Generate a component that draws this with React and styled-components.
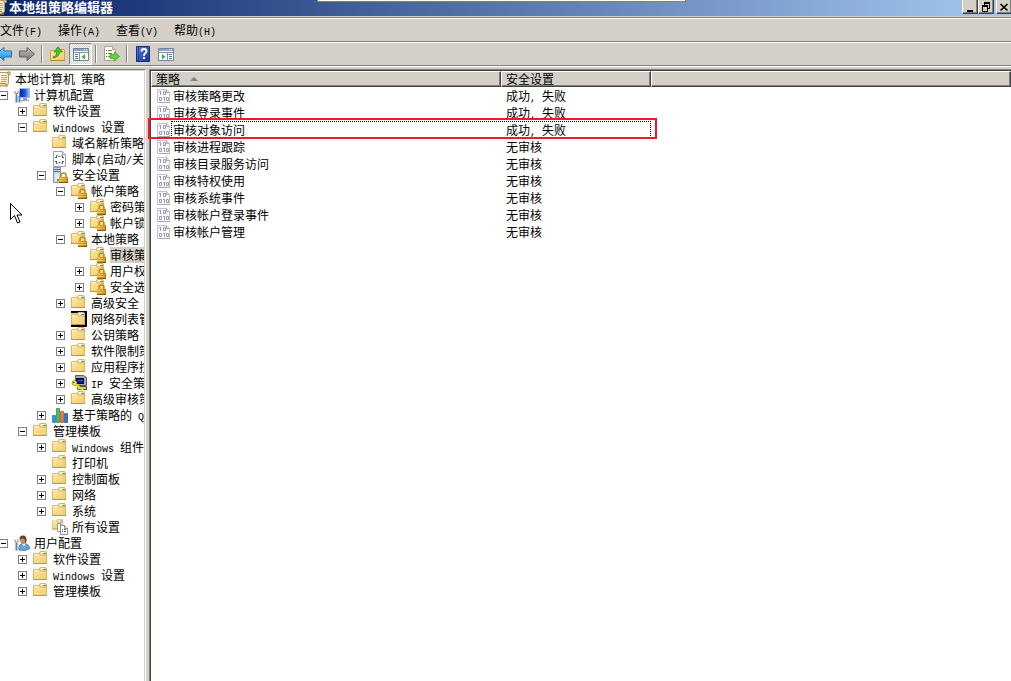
import React, { useState } from "react";
import styled, { createGlobalStyle, css } from "styled-components";

const FACE = "#d4d0c8";
const SHADOW = "#808080";
const DARK = "#404040";

const GlobalStyle = createGlobalStyle`
  *, *::before, *::after { box-sizing: border-box; }
  body {
    margin: 0;
    background: ${FACE};
    color: #000;
    font: 12px/16px "Noto Sans CJK SC", sans-serif;
  }
  button { font: inherit; color: inherit; padding: 0; border: 0; background: none; }
  svg { display: block; flex: none; }
`;

const Latin = styled.span`
  font-family: "Liberation Mono", monospace;
  font-size: 10px;
  line-height: 0;
  white-space: pre;
`;

/* Latin runs are set in a half-width face beside the full-width characters. */
function Mixed({ children }) {
  return children
    .split(/([\x20-\x7e]+)/)
    .filter(Boolean)
    .map((part, i) => (/^[\x20-\x7e]/.test(part) ? <Latin key={i}>{part}</Latin> : part));
}

/* ---------- icons ---------- */

const Icon = ({ children, size = 16 }) => (
  <svg width={size} height={size} viewBox={`0 0 ${size} ${size}`} aria-hidden="true">
    {children}
  </svg>
);

const HiddenSvg = styled.svg`
  position: absolute;
  width: 0;
  height: 0;
`;

const Gradients = () => (
  <HiddenSvg aria-hidden="true">
    <defs>
      <linearGradient id="gFolder" x1="0" y1="0" x2="1" y2="1">
        <stop offset="0" stopColor="#ffe9a4" />
        <stop offset="1" stopColor="#f0cb6c" />
      </linearGradient>
      <linearGradient id="gLock" x1="0" y1="0" x2="1" y2="0">
        <stop offset="0" stopColor="#e9b736" />
        <stop offset="1" stopColor="#b8780c" />
      </linearGradient>
      <linearGradient id="gBlue" x1="0" y1="0" x2="0" y2="1">
        <stop offset="0" stopColor="#8adcff" />
        <stop offset="1" stopColor="#1185d6" />
      </linearGradient>
      <linearGradient id="gGray" x1="0" y1="0" x2="0" y2="1">
        <stop offset="0" stopColor="#c0c0c0" />
        <stop offset="1" stopColor="#747474" />
      </linearGradient>
      <linearGradient id="gHelp" x1="0" y1="0" x2="1" y2="1">
        <stop offset="0" stopColor="#5c80e0" />
        <stop offset="1" stopColor="#16349c" />
      </linearGradient>
      <linearGradient id="gScreen" x1="0" y1="0" x2="1" y2="0">
        <stop offset="0" stopColor="#0a1f9c" />
        <stop offset=".55" stopColor="#1c54e0" />
        <stop offset="1" stopColor="#9ad0ff" />
      </linearGradient>
      <linearGradient id="gPaper" x1="0" y1="0" x2="1" y2="1">
        <stop offset="0" stopColor="#fffbe6" />
        <stop offset="1" stopColor="#ecdca8" />
      </linearGradient>
    </defs>
  </HiddenSvg>
);

const FolderShape = () => (
  <g>
    <path d="M6.500 4V1.500q0-1 1-1h5q1 0 1 1V4" fill="#f3d488" stroke="#dcb460" />
    <rect x="8" y="1" width="3" height="2" fill="#fff" />
    <rect x="10" y="2" width="3" height="1" fill="#3d98e6" />
    <path d="M.5 2.500h5.500l1.500 1.500h6v8.500H.5z" fill="url(#gFolder)" stroke="#dcb460" />
    <path d="M1 3.500h5" stroke="#fff6d4" />
    <path d="M0 12.500h14" stroke="#c4953f" />
  </g>
);

const LockShape = () => (
  <g>
    <path d="M9 10V8.500a2.500 2.500 0 0 1 5 0V10" fill="none" stroke="#b98a22" strokeWidth="1.500" />
    <rect x="7" y="10" width="9" height="6" fill="url(#gLock)" />
    <path d="M8 11.500h7M8 13.500h7" stroke="#f6d66c" strokeWidth=".6" />
    <path d="M7 15.500h9" stroke="#8a5a08" />
  </g>
);

const Scroll = () => (
  <g>
    <path d="M4.500 1.500h9v10.500l-1 2H4.500z" fill="url(#gPaper)" stroke="#b39c63" />
    <path d="M12.500 1q3-.8 3 1.500 0 1.500-2 1.500z" fill="#f2dc90" stroke="#a58a48" />
    <path d="M1.500 12.500h9q0 3 2 2.500H3q-1.800 0-1.500-2.500z" fill="#f0dc98" stroke="#a58a48" />
    <path d="M6 4.500h6M6 6.500h6M6 8.500h6M6 10.500h5" stroke="#b5aa8c" />
  </g>
);

const Page = ({ x = 0, y = 0, w = 12, h = 14, stroke = "#8a8a9a" }) => (
  <g>
    <path
      d={`M${x + 0.5} ${y + 0.5}h${w - 4}l3 3v${h - 4}h${1 - w}z`}
      fill="#fdfdfd"
      stroke={stroke}
    />
    <path d={`M${x + w - 3.5} ${y + 0.5}v3h3`} fill="#e4e4ea" stroke={stroke} />
  </g>
);

const treeIcons = {
  scroll: <Scroll />,
  folder: <FolderShape />,
  locked: (
    <g>
      <FolderShape />
      <LockShape />
    </g>
  ),
  boxed: (
    <g>
      <rect width="16" height="16" fill="#000" />
      <rect x="0" y="2" width="14" height="11" fill="#f3d488" />
      <g transform="translate(0 1)">
        <FolderShape />
      </g>
    </g>
  ),
  computer: (
    <g>
      <path d="M5.500 1.500h10v9h-10z" fill="url(#gScreen)" stroke="#a9b8d8" />
      <path d="M9 11h4v2H9z" fill="#8c96a8" />
      <path d="M7 13.500h8" stroke="#a4adbb" strokeWidth="1.500" />
      <path d="M2.500 8v7.500M5.500 9v6.500" stroke="#4c86c4" strokeWidth="2" />
      <path d="M1 4v2.500h3V4M2.500 6v2M5.500 5v4" fill="none" stroke="#7c8894" />
    </g>
  ),
  script: (
    <g>
      <path d="M1.500.5h9l3 3v12h-12z" fill="#fbfbfb" stroke="#a2a2aa" />
      <path d="M10.500.5v3h3" fill="#ddd" stroke="#a2a2aa" />
      <path d="M5.500 4.500h-1v2M9.500 4.500h1v2M5.500 12.500h-1v-2M9.500 12.500h1v-2" fill="none" stroke="#55575f" />
      <path d="M3 6.500h2M6.500 5.500h2M10 6.500h2M3 10.500h2M6.500 11.500h2M10 10.500h2" stroke="#55575f" />
    </g>
  ),
  server: (
    <g>
      <path d="M1.500.5h7v15h-7z" fill="#c4d6e4" stroke="#8398a8" />
      <path d="M2 2.500h6M2 4.500h6" stroke="#56707f" />
      <path d="M3 7h4v7H3z" fill="#e2ebf1" />
      <rect x="5" y="12" width="2" height="2" fill="#38b54a" />
      <LockShape />
    </g>
  ),
  ipsec: (
    <g>
      <path d="M4.500.5h8l3 2v8h-11z" fill="#a8a8a8" stroke="#606060" />
      <path d="M5.500 3.500h7v5h-7z" fill="#0018a0" stroke="#000" />
      <path d="M7 5.500h5" stroke="#2b62ff" />
      <path d="M6.500 11.500h9v3h-9z" fill="#c4c4c4" stroke="#444" />
      <circle cx="3.500" cy="8" r="2.500" fill="#fff200" stroke="#666600" strokeWidth=".6" />
      <path d="M5 9.500l7 5.500M8.500 12.500L7 14" stroke="#f2e400" strokeWidth="2" />
      <circle cx="2.800" cy="7.500" r=".8" fill="#444" />
    </g>
  ),
  bars: (
    <g>
      <path d="M.5 8.500h3v7h-3z" fill="#2f9be8" stroke="#13598f" strokeWidth=".6" />
      <path d="M4.500 1.500h3v14h-3z" fill="#44c64c" stroke="#1c7224" strokeWidth=".6" />
      <path d="M8.500 4.500h3v11h-3z" fill="#f2784c" stroke="#9c3718" strokeWidth=".6" />
      <path d="M12.500 6.500h3v9h-3z" fill="#1c80cc" stroke="#0c3e6c" strokeWidth=".6" />
    </g>
  ),
  all: (
    <g>
      <g transform="scale(.8)">
        <FolderShape />
      </g>
      <Page x={5} y={4} w={7} h={9} stroke="#9a9aa6" />
      <Page x={8} y={6} w={8} h={10} stroke="#8a8a9a" />
      <path d="M10 10.500h1M12 10.500h2M10 12.500h1M12 12.500h2" stroke="#666" />
    </g>
  ),
  user: (
    <g>
      <path d="M5 15q-1-5 3-6.500h3q5 1 4.500 5.500-4 2.500-10.500 1z" fill="#6c9fd4" stroke="#3c6fa8" strokeWidth=".7" />
      <path d="M8 8.500l2 3 1.500-3" fill="#fff" />
      <ellipse cx="9" cy="5" rx="3" ry="4" fill="#c98f60" />
      <path d="M5.500 5Q5 .5 9 .5q4 0 3.500 5.500Q12 8 11 8.500 11.500 4 9 3.500 6.500 3 5.500 5z" fill="#5c4630" />
      <path d="M2.500 8v7.500" stroke="#4c86c4" strokeWidth="2" />
      <path d="M1 4.500V7h3V4.500" fill="none" stroke="#7c8894" />
    </g>
  ),
};

const BackIcon = () => (
  <Icon>
    <path d="M.5 8L8 1.500V5h7.500v6H8v3.500z" fill="url(#gBlue)" stroke="#1c74b8" />
  </Icon>
);
const ForwardIcon = () => (
  <Icon>
    <path d="M15.500 8L8 1.500V5H.5v6H8v3.500z" fill="url(#gGray)" stroke="#606060" />
  </Icon>
);
const UpFolderIcon = () => (
  <Icon>
    <path d="M.5 4.500h5l1-1h8v11H.5z" fill="url(#gFolder)" stroke="#cf9f45" />
    <path d="M0 14.500h15" stroke="#b5842d" />
    <path d="M3 11q4-1 3.500-5H4L8 .8 12.500 6H9.500q0 5-6.500 6z" fill="#3fc32f" stroke="#1e8a18" strokeWidth=".7" />
  </Icon>
);
const PaneIcon = ({ right }) => (
  <Icon>
    <path d="M.5 2.500h15v12H.5z" fill="#fbfcfd" stroke="#73859a" />
    <path d="M1 4h14" stroke="#8fa3bb" strokeWidth="2" />
    <path d="M11 3.500h1M13 3.500h1" stroke="#fff" />
    <path d="M1 6.500h14" stroke="#8091a6" />
    {right ? (
      <g>
        <path d="M9.500 7v7" stroke="#8091a6" />
        <path d="M11 8.500h3M11 10.500h3M11 12.500h3" stroke="#5c7ba0" />
        <path d="M4 8v5.500L7.500 10.800z" fill="#35b52b" />
      </g>
    ) : (
      <g>
        <path d="M6.500 7v7" stroke="#8091a6" />
        <path d="M2 8.500h3M2 10.500h3M2 12.500h3" stroke="#5c7ba0" />
        <path d="M12 8v5.500L8.500 10.800z" fill="#35b52b" />
      </g>
    )}
  </Icon>
);
const ExportIcon = () => (
  <Icon>
    <path d="M.5.5h8l3 3v11H.5z" fill="#fffdf0" stroke="#aaa590" />
    <path d="M8.500.5v3h3" fill="#e8e4d0" stroke="#aaa590" />
    <path d="M2 4.500h1M4 4.500h4M2 7.500h1M4 7.500h4M2 10.500h1M4 10.500h3" stroke="#77746a" />
    <path d="M6 8.500h4.500V6l5 4.500-5 4.500v-2.500H6z" fill="#5fd440" stroke="#2a9a1c" strokeWidth=".7" />
  </Icon>
);
const HelpIcon = () => (
  <Icon>
    <path d="M1.500.5h13v15h-13z" fill="url(#gHelp)" stroke="#14307c" />
    <path d="M3.500 1v14" stroke="#1c3da4" />
    <path d="M6.500 5.500Q6.500 3 9 3t2.500 2.300Q11.500 6.500 10 7.500 9 8.300 9 10" fill="none" stroke="#fff" strokeWidth="1.800" />
    <rect x="8" y="11" width="2" height="2" fill="#fff" />
  </Icon>
);
const PolicyIcon = () => (
  <Icon>
    <path d="M1.500 1.500h9l3 3v10h-12z" fill="#fafafc" stroke="#c2c2c8" />
    <path d="M10.500 1.500v3h3" fill="#e0e0e6" stroke="#a8a8b0" />
    <path d="M3 14.500h11" stroke="#a8a8b0" />
    <path d="M4.500 3v4M3 3.500h1" stroke="#9c9cb0" />
    <path d="M7.500 3.500h2v3h-2zM3.500 9.500h2v3h-2zM10.500 9.500h2v3h-2z" fill="none" stroke="#9c9cb0" />
    <path d="M8.500 9v4M7 9.500h1" stroke="#9c9cb0" />
  </Icon>
);

/* ---------- title bar ---------- */

const Window = styled.div`
  display: flex;
  flex-direction: column;
  min-height: 100vh;
  overflow: hidden;
`;

const TitleBar = styled.header`
  position: relative;
  display: flex;
  align-items: flex-start;
  height: 16px;
  margin-right: -1px;
  background: linear-gradient(90deg, #0a246a, #a6caf0);
  color: #fff;
`;

const TitleIcon = styled.span`
  margin: -1px 2px 0 -9px;
`;

const Title = styled.h1`
  flex: 1;
  margin: 0;
  font-size: 13px;
  line-height: 14px;
  font-weight: 700;
`;

const Notice = styled.div`
  position: absolute;
  top: 0;
  left: 317px;
  width: 369px;
  height: 2px;
  background: #ffffe1;
  border: 1px solid ${SHADOW};
  border-top: 0;
`;

const raised = css`
  border: 1px solid ${DARK};
  border-top: 0;
  border-left-color: #fff;
  box-shadow: inset -1px -1px ${SHADOW};
`;

const WindowButton = styled.button`
  ${raised}
  display: grid;
  place-items: center;
  width: 16px;
  height: 14px;
  margin-left: ${(p) => (p.$apart ? 2 : 0)}px;
  background: ${FACE};
`;

/* ---------- menu and toolbar ---------- */

const Band = styled.div`
  display: flex;
  align-items: center;
  height: ${(p) => p.$height}px;
  border-bottom: 1px solid ${SHADOW};
  box-shadow: inset 0 1px #fff;
`;

const TitleEdge = styled.div`
  height: 2px;
  background: ${FACE};
  border-bottom: 1px solid ${SHADOW};
`;

const Menu = styled(Band).attrs({ as: "nav" })`
  gap: 16px;
`;

const MenuButton = styled.button`
  white-space: nowrap;
`;

const Toolbar = styled(Band)`
  padding-top: 1px;
  margin-left: -8px;
`;

const ToolButton = styled.button`
  display: grid;
  place-items: center;
  width: 23px;
  height: 22px;
  ${(p) =>
    p.$pressed &&
    css`
      border: 1px solid #fff;
      border-top-color: ${SHADOW};
      border-left-color: ${SHADOW};
      background: repeating-conic-gradient(#fff 0 25%, ${FACE} 0 50%) 0 0 / 2px 2px;
    `}
`;

const Divider = styled.span`
  width: 2px;
  height: 18px;
  margin: 0 3px;
  background: linear-gradient(90deg, ${SHADOW} 50%, #fff 50%);
`;

/* ---------- panes ---------- */

const Work = styled.main`
  flex: 1;
  display: flex;
  gap: 3px;
  padding-top: 3px;
  box-shadow: inset 0 1px #fff;
`;

const TreePane = styled.section`
  position: relative;
  flex: 0 0 146px;
  overflow: hidden;
  padding: 1px 1px 0 0;
  background: #fff;
  border-top: 1px solid ${SHADOW};
  border-right: 1px solid #fff;
  box-shadow: inset -1px 1px ${FACE}, inset 0 1px ${DARK};
`;

const TreeClip = styled.div`
  overflow: hidden;
`;

const Branch = styled.ul`
  list-style: none;
  margin: 0;
  padding: 0 0 0 ${(p) => (p.$root ? 0 : 19)}px;
  margin-left: ${(p) => (p.$root ? -20 : 0)}px;
`;

const TreeRow = styled.div`
  display: flex;
  align-items: center;
  height: 16px;
  white-space: nowrap;
`;

const ExpanderSlot = styled.span`
  flex: 0 0 9px;
  display: flex;
  margin-right: 6px;
`;

const Expander = styled.button`
  width: 9px;
  height: 9px;
  border: 1px solid ${SHADOW};
  background: #fff;
`;

const NodeLabel = styled.span`
  height: 16px;
  margin-left: 4px;
  background: ${(p) => (p.$selected ? FACE : "transparent")};
`;

const Pointer = styled.svg`
  position: absolute;
  left: 10px;
  top: 133px;
`;

const ListPane = styled.section`
  flex: 1;
  min-width: 0;
  padding: 1px 0 0 1px;
  background: #fff;
  border-top: 1px solid ${SHADOW};
  border-left: 1px solid ${SHADOW};
  box-shadow: inset 1px 1px ${DARK};
`;

const Table = styled.table`
  width: 100%;
  table-layout: fixed;
  border-collapse: separate;
  border-spacing: 0;
`;

const Head = styled.th`
  width: ${(p) => (p.$width ? `${p.$width}px` : "auto")};
  height: 16px;
  padding: 0 4px;
  background: ${FACE};
  border: 1px solid #fff;
  border-right-color: ${DARK};
  border-bottom-color: ${DARK};
  box-shadow: inset -1px -1px ${SHADOW};
  font-weight: 400;
  line-height: 14px;
  text-align: left;
`;

const SortMark = styled.span`
  display: inline-block;
  margin: 0 0 3px 10px;
  border: 4px solid transparent;
  border-top: 0;
  border-bottom: 4px solid ${SHADOW};
`;

const Row = styled.tr`
  position: relative;
`;

const Cell = styled.td`
  height: 17px;
  padding: 0 5px;
  line-height: 17px;
  white-space: nowrap;
`;

const Policy = styled.span`
  display: flex;
  align-items: center;
  gap: 1px;
  height: 17px;
`;

const FocusRect = styled.span`
  position: absolute;
  top: 0;
  left: 20px;
  width: 480px;
  height: 17px;
  border: 1px dotted #000;
`;

const Highlight = styled.span`
  position: absolute;
  top: -3px;
  left: -3px;
  width: 509px;
  height: 21px;
  border: 2px solid #ed1c24;
`;

/* ---------- data ---------- */

const node = (label, icon = "folder", children, extra) => ({ label, icon, children, ...extra });
const closed = [];

const tree = node("本地计算机 策略", "scroll", [
  node("计算机配置", "computer", [
    node("软件设置", "folder", closed),
    node("Windows 设置", "folder", [
      node("域名解析策略"),
      node("脚本(启动/关", "script"),
      node("安全设置", "server", [
        node("帐户策略", "locked", [
          node("密码策", "locked", closed),
          node("帐户锁", "locked", closed),
        ]),
        node("本地策略", "locked", [
          node("审核策", "locked", undefined, { selected: true }),
          node("用户权", "locked", closed),
          node("安全选", "locked", closed),
        ]),
        node("高级安全", "folder", closed),
        node("网络列表管", "boxed"),
        node("公钥策略", "folder", closed),
        node("软件限制策", "folder", closed),
        node("应用程序控", "folder", closed),
        node("IP 安全策", "ipsec", closed),
        node("高级审核策", "folder", closed),
      ]),
      node("基于策略的 Q", "bars", closed),
    ]),
    node("管理模板", "folder", [
      node("Windows 组件", "folder", closed),
      node("打印机"),
      node("控制面板", "folder", closed),
      node("网络", "folder", closed),
      node("系统", "folder", closed),
      node("所有设置", "all"),
    ]),
  ]),
  node("用户配置", "user", [
    node("软件设置", "folder", closed),
    node("Windows 设置", "folder", closed),
    node("管理模板", "folder", closed),
  ]),
]);

const policies = [
  ["审核策略更改", "成功, 失败"],
  ["审核登录事件", "成功, 失败"],
  ["审核对象访问", "成功, 失败"],
  ["审核进程跟踪", "无审核"],
  ["审核目录服务访问", "无审核"],
  ["审核特权使用", "无审核"],
  ["审核系统事件", "无审核"],
  ["审核帐户登录事件", "无审核"],
  ["审核帐户管理", "无审核"],
];

function TreeNode({ item, root }) {
  const kids = item.children;
  const [open, setOpen] = useState(Boolean(kids && kids.length));
  return (
    <li>
      <TreeRow>
        <ExpanderSlot>
          {kids && !root && (
            <Expander aria-label={item.label} aria-expanded={open} onClick={() => setOpen(!open)}>
              <svg width="7" height="7" viewBox="0 0 7 7" aria-hidden="true">
                <path d={open ? "M1 3.500h5" : "M1 3.500h5M3.500 1v5"} stroke="#000" />
              </svg>
            </Expander>
          )}
        </ExpanderSlot>
        <Icon>{treeIcons[item.icon]}</Icon>
        <NodeLabel $selected={item.selected}>
          <Mixed>{item.label}</Mixed>
        </NodeLabel>
      </TreeRow>
      {open && (
        <Branch>
          {kids.map((k) => (
            <TreeNode key={k.label} item={k} />
          ))}
        </Branch>
      )}
    </li>
  );
}

export default function App() {
  return (
    <Window>
      <GlobalStyle />
      <Gradients />
      <TitleBar>
        <TitleIcon>
          <Icon>
            <Scroll />
          </Icon>
        </TitleIcon>
        <Title>本地组策略编辑器</Title>
        <Notice />
        <WindowButton aria-label="最小化">
          <svg width="10" height="10" viewBox="0 0 10 10">
            <path d="M2 9h6" stroke="#000" strokeWidth="2" />
          </svg>
        </WindowButton>
        <WindowButton aria-label="还原">
          <svg width="10" height="10" viewBox="0 0 10 10">
            <path d="M3 1h6M1 4h6" stroke="#000" strokeWidth="2" />
            <path d="M3.500 1v3M8.500 1v5.500H7M1.500 4v5.500h5V4" fill="none" stroke="#000" />
          </svg>
        </WindowButton>
        <WindowButton aria-label="关闭" $apart>
          <svg width="10" height="10" viewBox="0 0 10 10">
            <path d="M1.500 2l7 6.500M8.500 2l-7 6.500" stroke="#000" strokeWidth="1.700" />
          </svg>
        </WindowButton>
      </TitleBar>
      <TitleEdge />
      <Menu $height={24}>
        {["文件(F)", "操作(A)", "查看(V)", "帮助(H)"].map((m) => (
          <MenuButton key={m}>
            <Mixed>{m}</Mixed>
          </MenuButton>
        ))}
      </Menu>
      <Toolbar $height={24} role="toolbar">
        <ToolButton aria-label="后退"><BackIcon /></ToolButton>
        <ToolButton aria-label="前进"><ForwardIcon /></ToolButton>
        <Divider />
        <ToolButton aria-label="向上"><UpFolderIcon /></ToolButton>
        <ToolButton aria-label="控制台树" $pressed><PaneIcon /></ToolButton>
        <Divider />
        <ToolButton aria-label="导出列表"><ExportIcon /></ToolButton>
        <Divider />
        <ToolButton aria-label="帮助"><HelpIcon /></ToolButton>
        <ToolButton aria-label="操作窗格"><PaneIcon right /></ToolButton>
      </Toolbar>
      <Work>
        <TreePane>
          <TreeClip>
            <Branch $root>
              <TreeNode item={tree} root />
            </Branch>
          </TreeClip>
          <Pointer width="13" height="21" viewBox="0 0 13 21" aria-hidden="true">
            <path
              d="M.5.5v16l4-4 3 7.500 2.500-1-3-7h5z"
              fill="#fff"
              stroke="#000"
            />
          </Pointer>
        </TreePane>
        <ListPane>
          <Table>
            <thead>
              <tr>
                <Head $width={350}>
                  策略
                  <SortMark />
                </Head>
                <Head $width={150}>安全设置</Head>
                <Head as="td" />
              </tr>
            </thead>
            <tbody>
              {policies.map(([name, value], i) => (
                <Row key={name}>
                  <Cell>
                    <Policy>
                      <PolicyIcon />
                      {name}
                    </Policy>
                    {i === 2 && (
                      <>
                        <FocusRect />
                        <Highlight />
                      </>
                    )}
                  </Cell>
                  <Cell>
                    <Mixed>{value}</Mixed>
                  </Cell>
                  <Cell />
                </Row>
              ))}
            </tbody>
          </Table>
        </ListPane>
      </Work>
    </Window>
  );
}
